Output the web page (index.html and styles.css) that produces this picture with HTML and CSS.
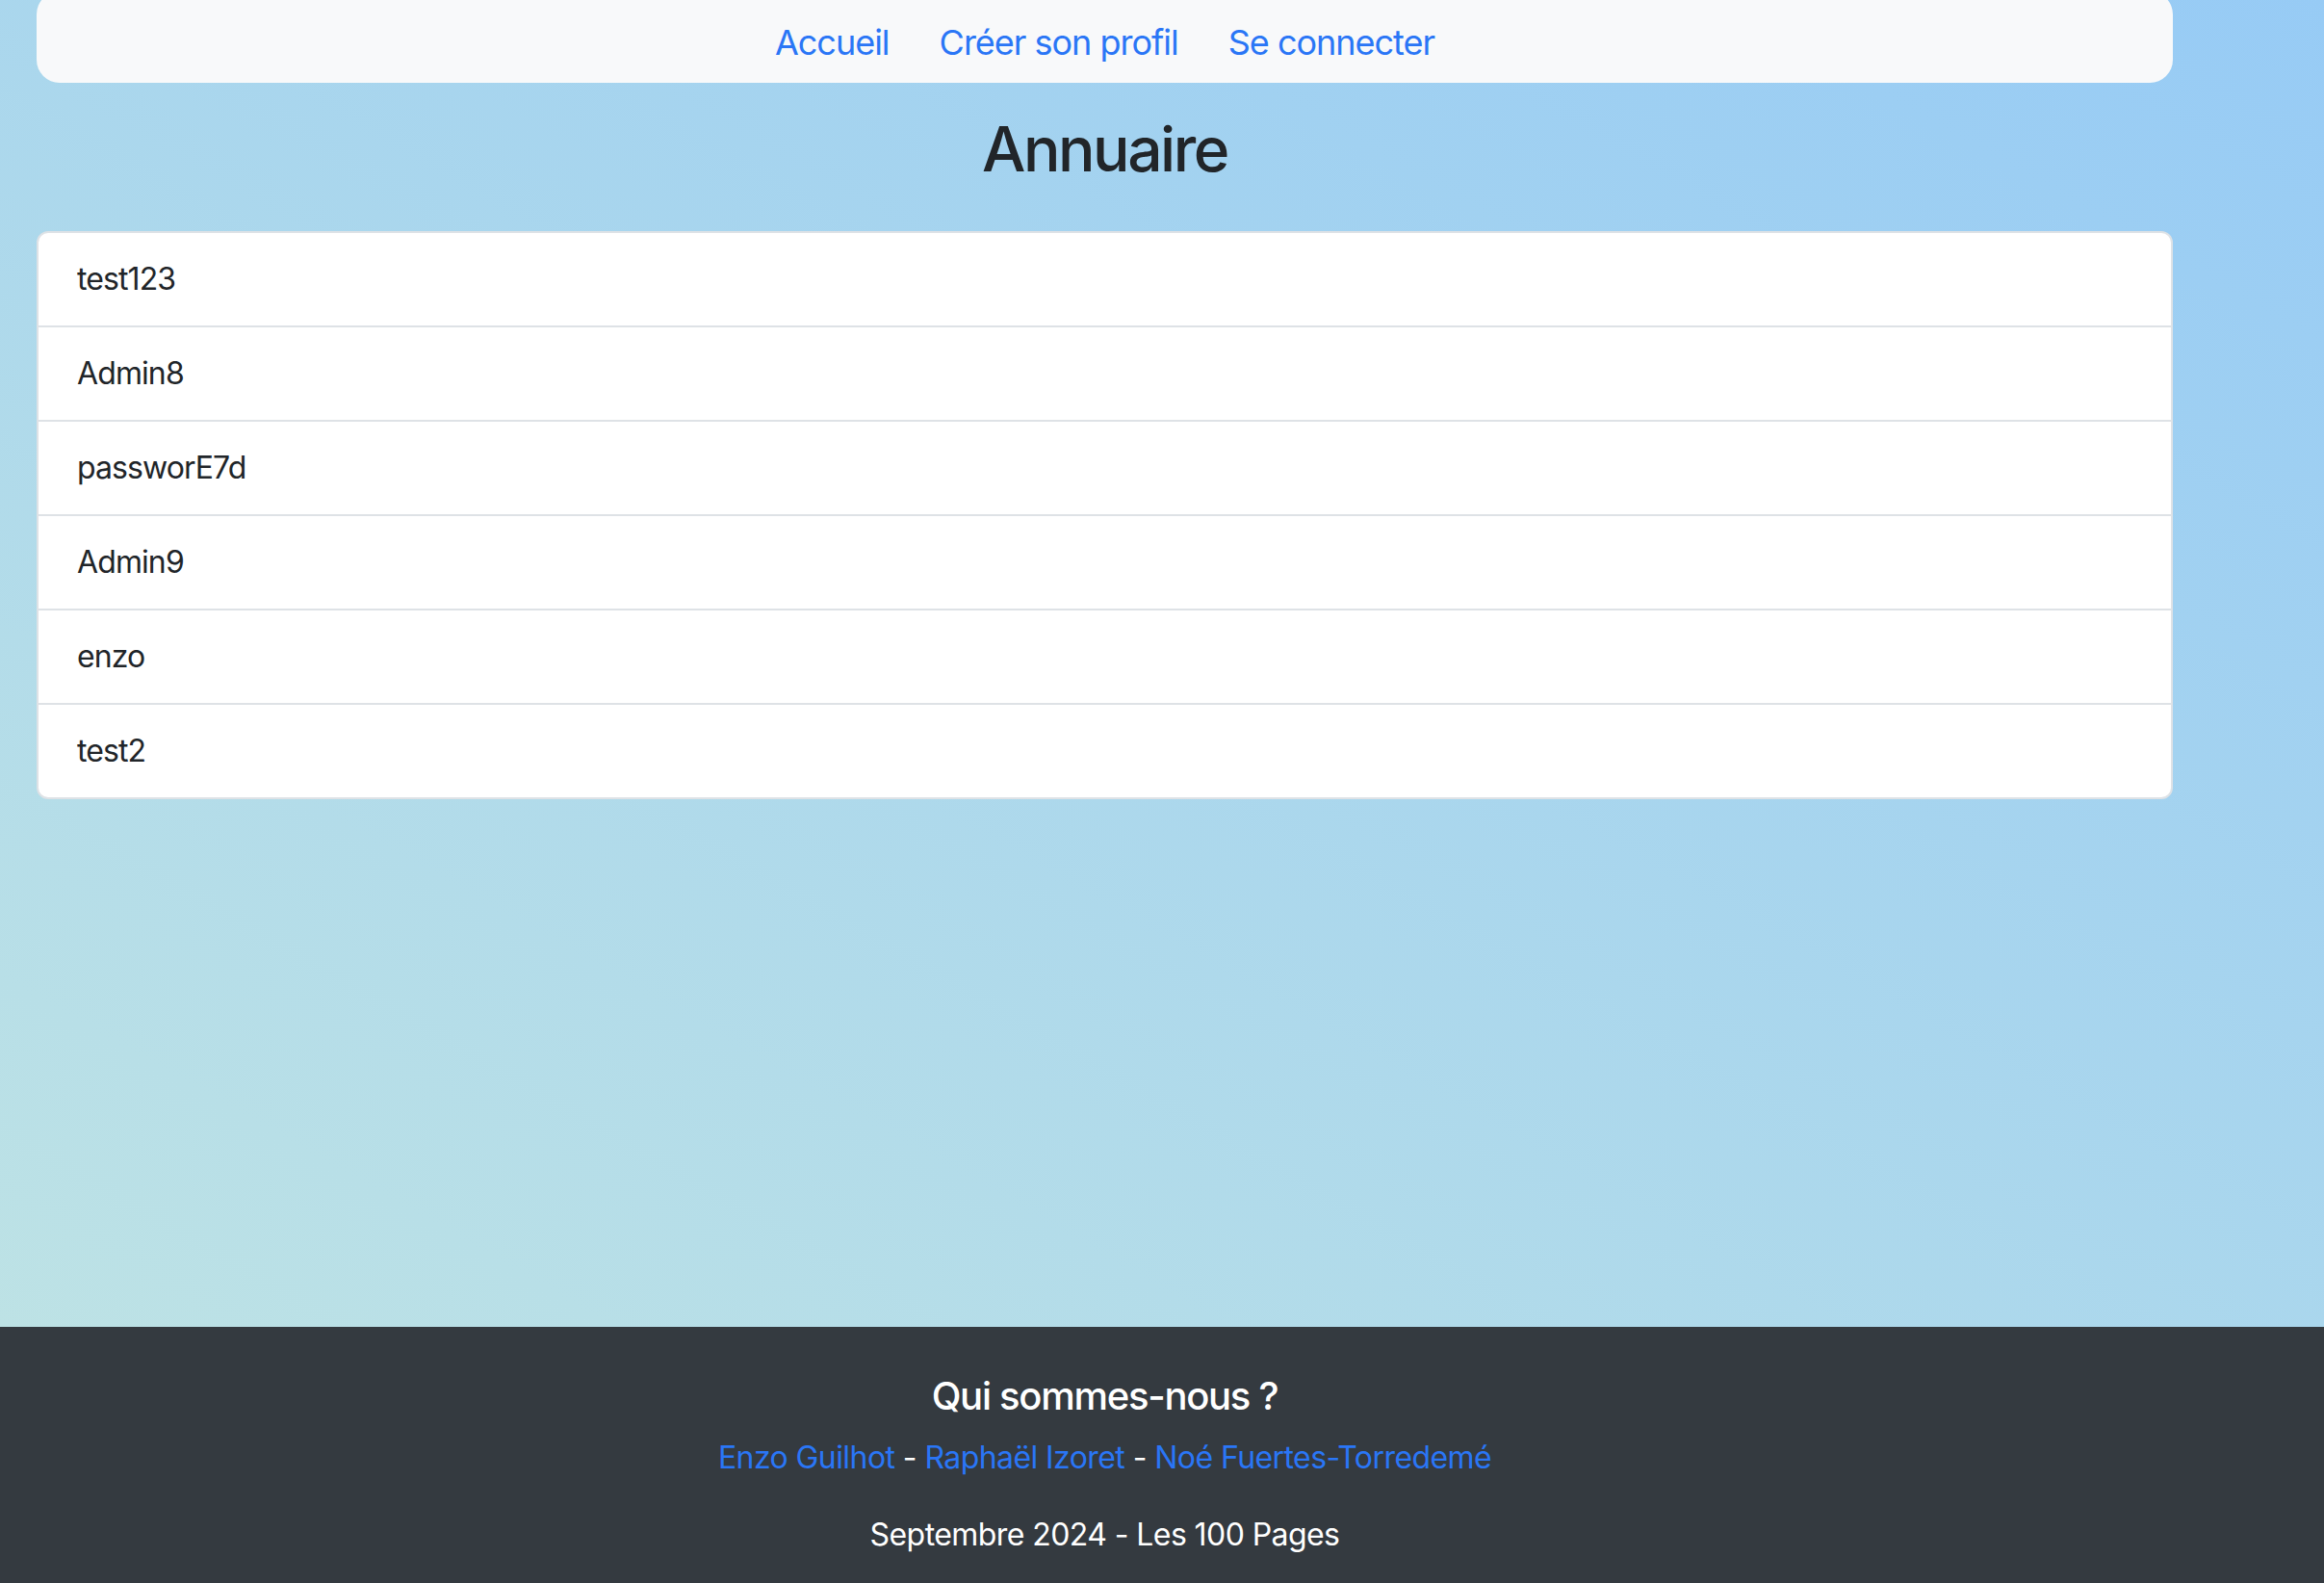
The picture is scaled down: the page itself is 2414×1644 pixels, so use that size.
FILE: index.html
```html
<!DOCTYPE html>
<html lang="fr">
<head>
<meta charset="utf-8">
<title>Annuaire</title>
<link rel="stylesheet" href="styles.css">
</head>
<body>
<main class="main">
  <nav class="navbar">
    <a class="nav-link" href="#">Accueil</a>
    <a class="nav-link" href="#">Créer son profil</a>
    <a class="nav-link" href="#">Se connecter</a>
  </nav>
  <h2 class="title">Annuaire</h2>
  <ul class="list">
    <li class="list-item">test123</li>
    <li class="list-item">Admin8</li>
    <li class="list-item">passworE7d</li>
    <li class="list-item">Admin9</li>
    <li class="list-item">enzo</li>
    <li class="list-item">test2</li>
  </ul>
</main>
<footer class="footer">
  <h5 class="footer-title">Qui sommes-nous ?</h5>
  <p class="footer-line"><a class="footer-link" href="#">Enzo Guilhot</a> - <a class="footer-link" href="#">Raphaël Izoret</a> - <a class="footer-link" href="#">Noé Fuertes-Torredemé</a></p>
  <p class="footer-line">Septembre 2024 - Les 100 Pages</p>
</footer>
</body>
</html>
```
FILE: styles.css
```css
html, body {
  margin: 0;
  padding: 0;
}
body {
  font-family: Inter, "Noto Sans", "Liberation Sans", sans-serif;
  color: #212529;
  background: #343a40;
}
.main {
  display: flow-root;
  box-sizing: border-box;
  min-height: 1378px;
  padding: 0 157px 0 38px;
  background: linear-gradient(to top right, #bde2e5, #97cbf5);
}
.navbar {
  margin-top: -9px;
  padding: 26px 0 15px;
  background: #f8f9fa;
  border-radius: 24px;
  display: flex;
  justify-content: center;
}
.nav-link {
  font-size: 36px;
  line-height: 54px;
  letter-spacing: -0.028em;
  padding: 0 26px;
  color: #2a76f6;
  text-decoration: none;
}
.title {
  margin: 31px 0 46px;
  font-size: 64px;
  font-weight: 500;
  line-height: 76.8px;
  letter-spacing: -0.038em;
  text-align: center;
}
.list {
  margin: 0;
  padding: 0;
  list-style: none;
  background: #fff;
  border: 2px solid #dee2e6;
  border-radius: 12px;
}
.list-item {
  padding: 24px 40px;
  font-size: 32px;
  line-height: 48px;
  letter-spacing: -0.028em;
}
.list-item + .list-item {
  border-top: 2px solid #dee2e6;
}
.footer {
  box-sizing: border-box;
  height: 266px;
  padding: 48px 157px 0 38px;
  background: #343a40;
  color: #fff;
  text-align: center;
}
.footer-title {
  margin: 0 0 16px;
  font-size: 40px;
  font-weight: 500;
  line-height: 48px;
  letter-spacing: -0.032em;
}
.footer-line {
  margin: 0 0 32px;
  font-size: 32px;
  line-height: 48px;
  letter-spacing: -0.018em;
}
.footer-link {
  color: #2a76f6;
  text-decoration: none;
}
```
